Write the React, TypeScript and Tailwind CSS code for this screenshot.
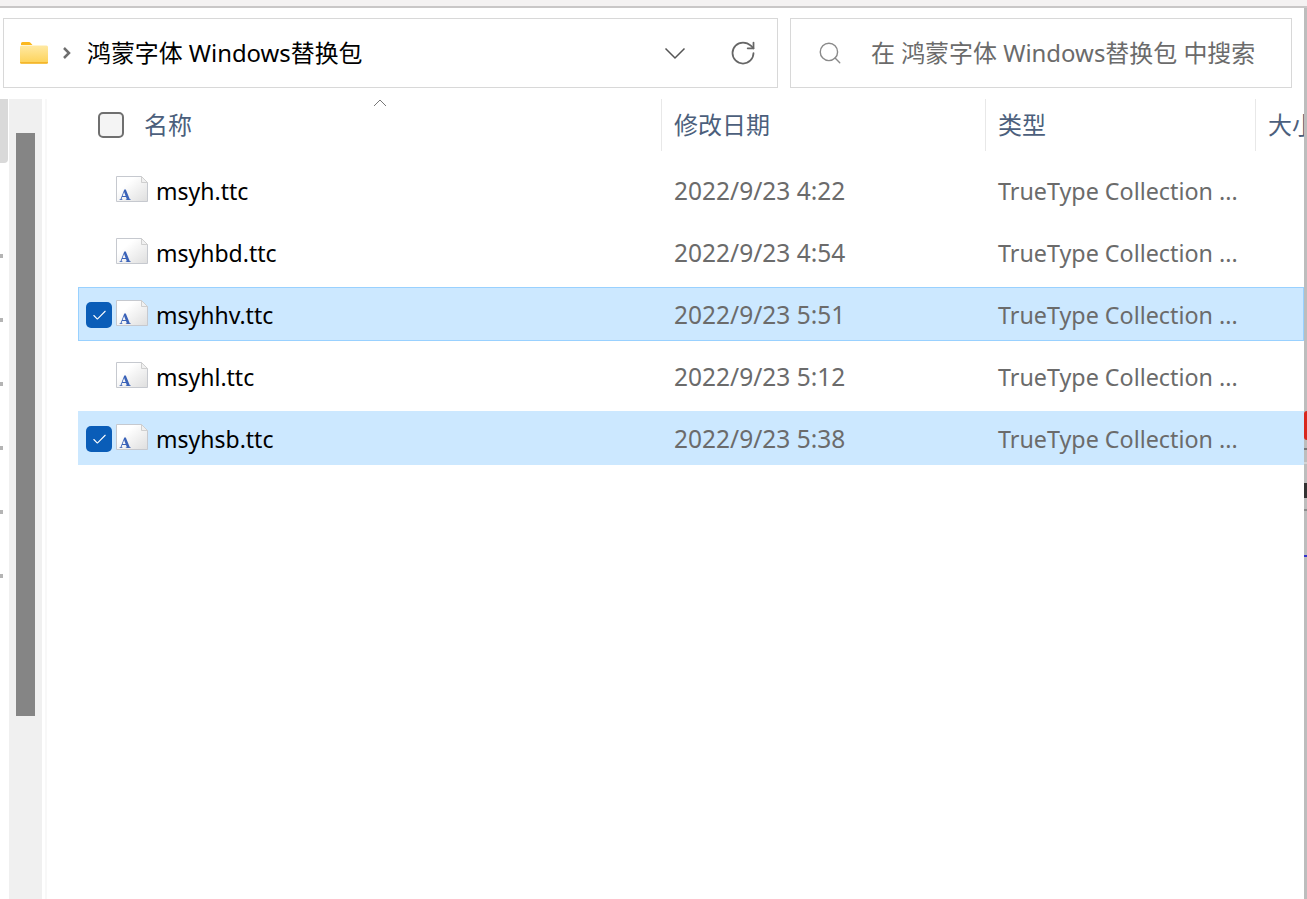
import React, { FC } from 'react';
import { Check, RotateCw, Search } from 'lucide-react';

interface FileRow {
  name: string;
  date: string;
  selected?: boolean;
  outlined?: boolean;
}

const rows: FileRow[] = [
  { name: 'msyh.ttc', date: '2022/9/23 4:22' },
  { name: 'msyhbd.ttc', date: '2022/9/23 4:54' },
  { name: 'msyhhv.ttc', date: '2022/9/23 5:51', selected: true, outlined: true },
  { name: 'msyhl.ttc', date: '2022/9/23 5:12' },
  { name: 'msyhsb.ttc', date: '2022/9/23 5:38', selected: true }
];

const FolderIcon: FC = () => (
  <svg width="29" height="22" viewBox="0 0 29 22">
    <defs>
      <linearGradient id="folder" x1="0" y1="0" x2="0" y2="1">
        <stop offset="0" stopColor="#ffe9a3" />
        <stop offset="1" stopColor="#fdd257" />
      </linearGradient>
    </defs>
    <path d="M1 1.5A1.5 1.5 0 0 1 2.5 0h6.5a2 2 0 0 1 1.5.7L12.500 3H1z" fill="#fbb81f" />
    <rect x="0" y="3.500" width="28" height="18" rx="1.500" fill="url(#folder)" />
    <path d="M0 20h28v.2a1.500 1.500 0 0 1-1.500 1.500h-25A1.500 1.500 0 0 1 0 20.200z" fill="#f4b62c" />
  </svg>
);

const FontFileIcon: FC = () => (
  <svg width="32" height="26" viewBox="0 0 32 26" className="shrink-0 mb-[3px]">
    <defs>
      <linearGradient id="sheet" x1="0" y1="0" x2="1" y2="1">
        <stop offset="0.300" stopColor="#ffffff" />
        <stop offset="1" stopColor="#dedede" />
      </linearGradient>
    </defs>
    <path d="M.5.5h25l6 6v19H.5z" fill="url(#sheet)" stroke="#c6c9cf" />
    <path d="M25.500.5v6h6z" fill="#f0f0f0" stroke="#cfcfcf" />
    <path d="M3.500 24h3v-.6l-1-.2 .7-2.200h3.800l.8 2.200-1 .2v.6h5v-.6l-1-.2L9.800 13.500H8.300l-3.800 9.700-1 .2zM6.600 20l1.500-4 1.500 4z" fill="#3a62b8" />
  </svg>
);

const HeaderCell: FC<{ label: string; width: string }> = ({ label, width }) => (
  <div className={`${width} h-[52px] pl-3 flex items-center border-l border-[#e8e8e8] text-[24px] text-[#4c5f7c] whitespace-nowrap overflow-hidden`}>
    {label}
  </div>
);

export default function App() {
  return (
    <div
      className="w-[1307px] h-[899px] overflow-hidden bg-white flex flex-col text-black"
      style={{ fontFamily: '"Noto Sans", "Noto Sans CJK SC", sans-serif' }}>
      <div className="h-[8px] shrink-0 bg-[#f4f2f2] border-b-2 border-[#c9c7c7]" />

      <div className="flex flex-1 min-h-0">
        <div className="flex-1 min-w-0 flex flex-col">
          {/* address bar */}
          <div className="flex gap-3 pl-[3px] pr-[12px] pt-[10px] shrink-0">
            <div className="w-[775px] h-[70px] border border-[#d8d8d8] flex items-center pl-[16px] pr-[20px]">
              <FolderIcon />
              <svg width="10" height="14" viewBox="0 0 10 14" className="ml-[13px]">
                <path d="M2 2l5 5-5 5" fill="none" stroke="#6e6e6e" strokeWidth="2.500" />
              </svg>
              <span className="ml-[15px] text-[23.900px] leading-none whitespace-nowrap">鸿蒙字体 Windows替换包</span>
              <svg width="22" height="13" viewBox="0 0 22 13" className="ml-auto">
                <path d="M1.500 1.500L11 11l9.500-9.500" fill="none" stroke="#555" strokeWidth="1.500" />
              </svg>
              <RotateCw className="ml-[43px] text-[#666]" size={28} strokeWidth={1.500} />
            </div>
            <div className="w-[502px] h-[70px] border border-[#d8d8d8] flex items-center pl-[26px] text-[#6b6b6b]">
              <Search className="text-[#8a8a8a]" size={26} strokeWidth={1.300} />
              <span className="ml-[28px] text-[23.950px] leading-none whitespace-nowrap">在 鸿蒙字体 Windows替换包 中搜索</span>
            </div>
          </div>

          <div className="flex flex-1 min-h-0 mt-[11px]">
            {/* nav pane edge and its scrollbar */}
            <div className="w-[8px] shrink-0 flex flex-col">
              <div className="h-[64px] bg-[#d9d9d9] rounded-br-sm" />
              <div className="flex flex-col gap-[60px] mt-[91px]">
                {[0, 1, 2, 3, 4, 5].map(i => (
                  <div key={i} className="w-[3px] h-[4px] bg-[#b4b4b4]" />
                ))}
              </div>
            </div>
            <div className="w-[33px] ml-[1px] shrink-0 bg-[#f0f0f0] pl-[7px] pt-[34px]">
              <div className="w-[19px] h-[583px] bg-[#858585]" />
            </div>
            <div className="w-[2px] ml-[3px] shrink-0 bg-[#f8f8f8]" />

            {/* file list */}
            <div className="flex-1 min-w-0 pl-[31px]">
              <div className="relative flex h-[52px] items-center">
                <svg width="14" height="8" viewBox="0 0 14 8" className="absolute left-[295px] top-0">
                  <path d="M1 7l6-6 6 6" fill="none" stroke="#777" strokeWidth="1" />
                </svg>
                <div className="w-[583px] flex items-center pl-[20px]">
                  <div className="w-[26px] h-[26px] rounded-[5px] border-2 border-[#6f6f6f] bg-[#f4f4f4]" />
                  <span className="ml-[20px] text-[24px] text-[#4c5f7c]">名称</span>
                </div>
                <HeaderCell label="修改日期" width="w-[324px]" />
                <HeaderCell label="类型" width="w-[270px]" />
                <HeaderCell label="大小" width="w-[49px]" />
              </div>

              <div className="flex flex-col gap-2 mt-[12px]">
                {rows.map(row => (
                  <div
                    key={row.name}
                    className={`flex items-center h-[54px] pl-[7px] border ${
                      row.selected ? 'bg-[#cce8ff]' : 'bg-white'
                    } ${row.outlined ? 'border-[#99d1ff]' : 'border-transparent'}`}>
                    <div className="w-[30px] flex shrink-0 pt-[2px]">
                      {row.selected && (
                        <div className="w-[26px] h-[26px] rounded-[5px] bg-[#0a5db8] flex items-center justify-center">
                          <Check className="text-white" size={17} strokeWidth={1.500} />
                        </div>
                      )}
                    </div>
                    <FontFileIcon />
                    <span className="ml-2 w-[518px] shrink-0 pt-[2px] text-[23px]">{row.name}</span>
                    <span className="w-[324px] shrink-0 pt-[2px] text-[24.500px] text-[#6b6b6b] whitespace-nowrap">{row.date}</span>
                    <span className="pt-[2px] text-[23.300px] text-[#6b6b6b] whitespace-nowrap">TrueType Collection ...</span>
                  </div>
                ))}
              </div>
            </div>
          </div>
        </div>

        {/* edge of the window behind */}
        <div className="w-[3px] shrink-0 bg-[#bdbdbd] flex flex-col">
          <div className="h-[403px]" />
          <div className="h-[29px] bg-[#d8281f] rounded-l-sm" />
          <div className="h-[8px]" />
          <div className="h-[2px] bg-[#777]" />
          <div className="h-[12px]" />
          <div className="h-[2px] bg-[#d4d4d4]" />
          <div className="h-[19px]" />
          <div className="h-[15px] bg-[#333]" />
          <div className="h-[11px]" />
          <div className="h-[2px] bg-[#8c8c8c]" />
          <div className="h-[44px]" />
          <div className="h-[2px] bg-[#3333cc]" />
        </div>
      </div>
    </div>
  );
}
